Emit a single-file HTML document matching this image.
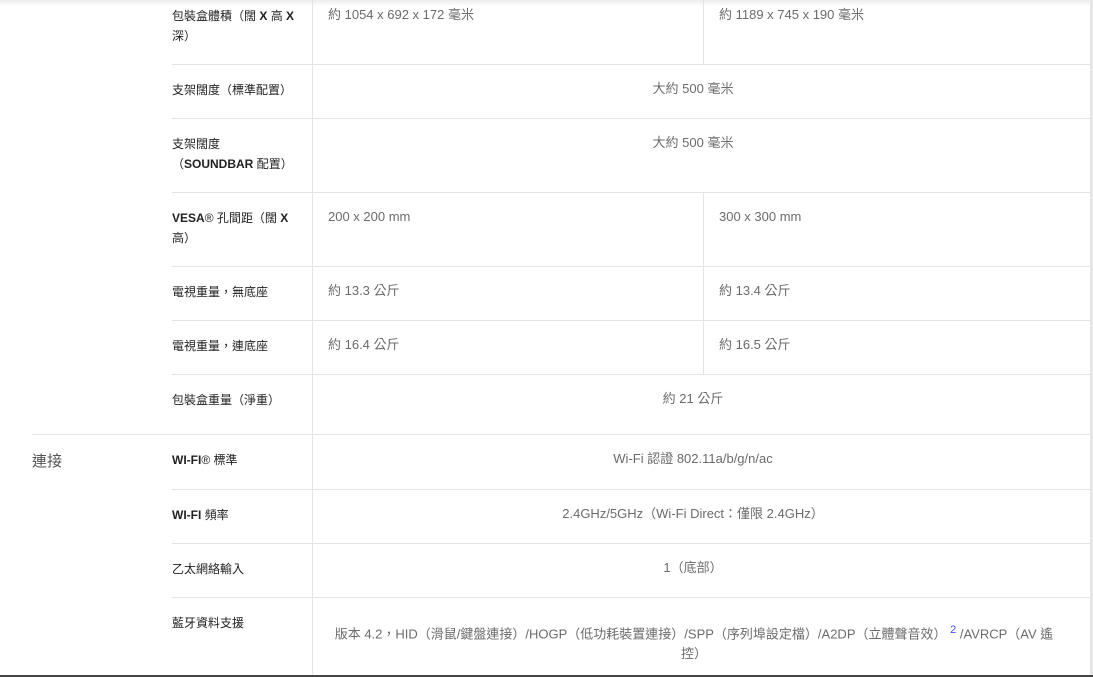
<!DOCTYPE html>
<html><head><meta charset="utf-8"><style>
body{margin:0;width:1093px;height:677px;background:#fff;position:relative;overflow:hidden;font-family:"Liberation Sans","Noto Sans CJK TC",sans-serif;}
.h{position:absolute;height:1px;background:#e3e4e8;}
.v{position:absolute;width:1px;background:#e3e4e8;}
.l{position:absolute;left:172px;font-size:12px;line-height:20px;color:#222;width:130px;}
.l b{font-weight:bold;}
.t{position:absolute;font-size:13px;line-height:20px;color:#6b6b6b;}
.c{text-align:center;left:313px;width:760px;}
.a{left:328px}.b{left:719px}
</style></head><body>
<div style="position:absolute;left:0;top:0;width:1093px;height:6px;background:linear-gradient(#ececec,#fff)"></div>
<div class="v" style="left:312px;top:0;height:677px"></div>
<div class="v" style="left:703px;top:0;height:64px"></div>
<div class="v" style="left:703px;top:192px;height:182px"></div>
<div style="position:absolute;left:1090px;top:0;width:3px;height:677px;background:#e6e6e6"></div>
<div class="h" style="left:172px;top:64px;width:918px"></div>
<div class="h" style="left:172px;top:118px;width:918px"></div>
<div class="h" style="left:172px;top:192px;width:918px"></div>
<div class="h" style="left:172px;top:266px;width:918px"></div>
<div class="h" style="left:172px;top:320px;width:918px"></div>
<div class="h" style="left:172px;top:374px;width:918px"></div>
<div class="h" style="left:32px;top:434px;width:1058px"></div>
<div class="h" style="left:172px;top:489px;width:918px"></div>
<div class="h" style="left:172px;top:543px;width:918px"></div>
<div class="h" style="left:172px;top:597px;width:918px"></div>
<div style="position:absolute;left:0;top:675px;width:1093px;height:2px;background:#444"></div>

<div class="l" style="top:6px">包裝盒體積（闊 <b>X</b> 高 <b>X</b><br>深）</div>
<div class="t a" style="top:5px">約 1054 x 692 x 172 毫米</div>
<div class="t b" style="top:5px">約 1189 x 745 x 190 毫米</div>

<div class="l" style="top:80px">支架闊度（標準配置）</div>
<div class="t c" style="top:79px">大約 500 毫米</div>

<div class="l" style="top:134px">支架闊度<br>（<b>SOUNDBAR</b> 配置）</div>
<div class="t c" style="top:133px">大約 500 毫米</div>

<div class="l" style="top:208px"><b>VESA</b>® 孔間距（闊 <b>X</b><br>高）</div>
<div class="t a" style="top:207px">200 x 200 mm</div>
<div class="t b" style="top:207px">300 x 300 mm</div>

<div class="l" style="top:282px">電視重量，無底座</div>
<div class="t a" style="top:281px">約 13.3 公斤</div>
<div class="t b" style="top:281px">約 13.4 公斤</div>

<div class="l" style="top:336px">電視重量，連底座</div>
<div class="t a" style="top:335px">約 16.4 公斤</div>
<div class="t b" style="top:335px">約 16.5 公斤</div>

<div class="l" style="top:390px">包裝盒重量（淨重）</div>
<div class="t c" style="top:389px">約 21 公斤</div>

<div class="t" style="left:32px;top:452px;font-size:15px;color:#555">連接</div>
<div class="l" style="top:450px"><b>WI-FI</b>® 標準</div>
<div class="t c" style="top:449px">Wi-Fi 認證 802.11a/b/g/n/ac</div>

<div class="l" style="top:505px"><b>WI-FI</b> 頻率</div>
<div class="t c" style="top:504px">2.4GHz/5GHz（Wi-Fi Direct：僅限 2.4GHz）</div>

<div class="l" style="top:559px">乙太網絡輸入</div>
<div class="t c" style="top:558px">1（底部）</div>

<div class="l" style="top:613px">藍牙資料支援</div>
<div class="t" style="top:620px;left:330px;width:728px;text-align:center">版本 4.2，HID（滑鼠/鍵盤連接）/HOGP（低功耗裝置連接）/SPP（序列埠設定檔）/A2DP（立體聲音效） <sup style="color:#4a4aff;font-size:11px">2</sup> /AVRCP（AV 遙控）</div>
</body></html>
